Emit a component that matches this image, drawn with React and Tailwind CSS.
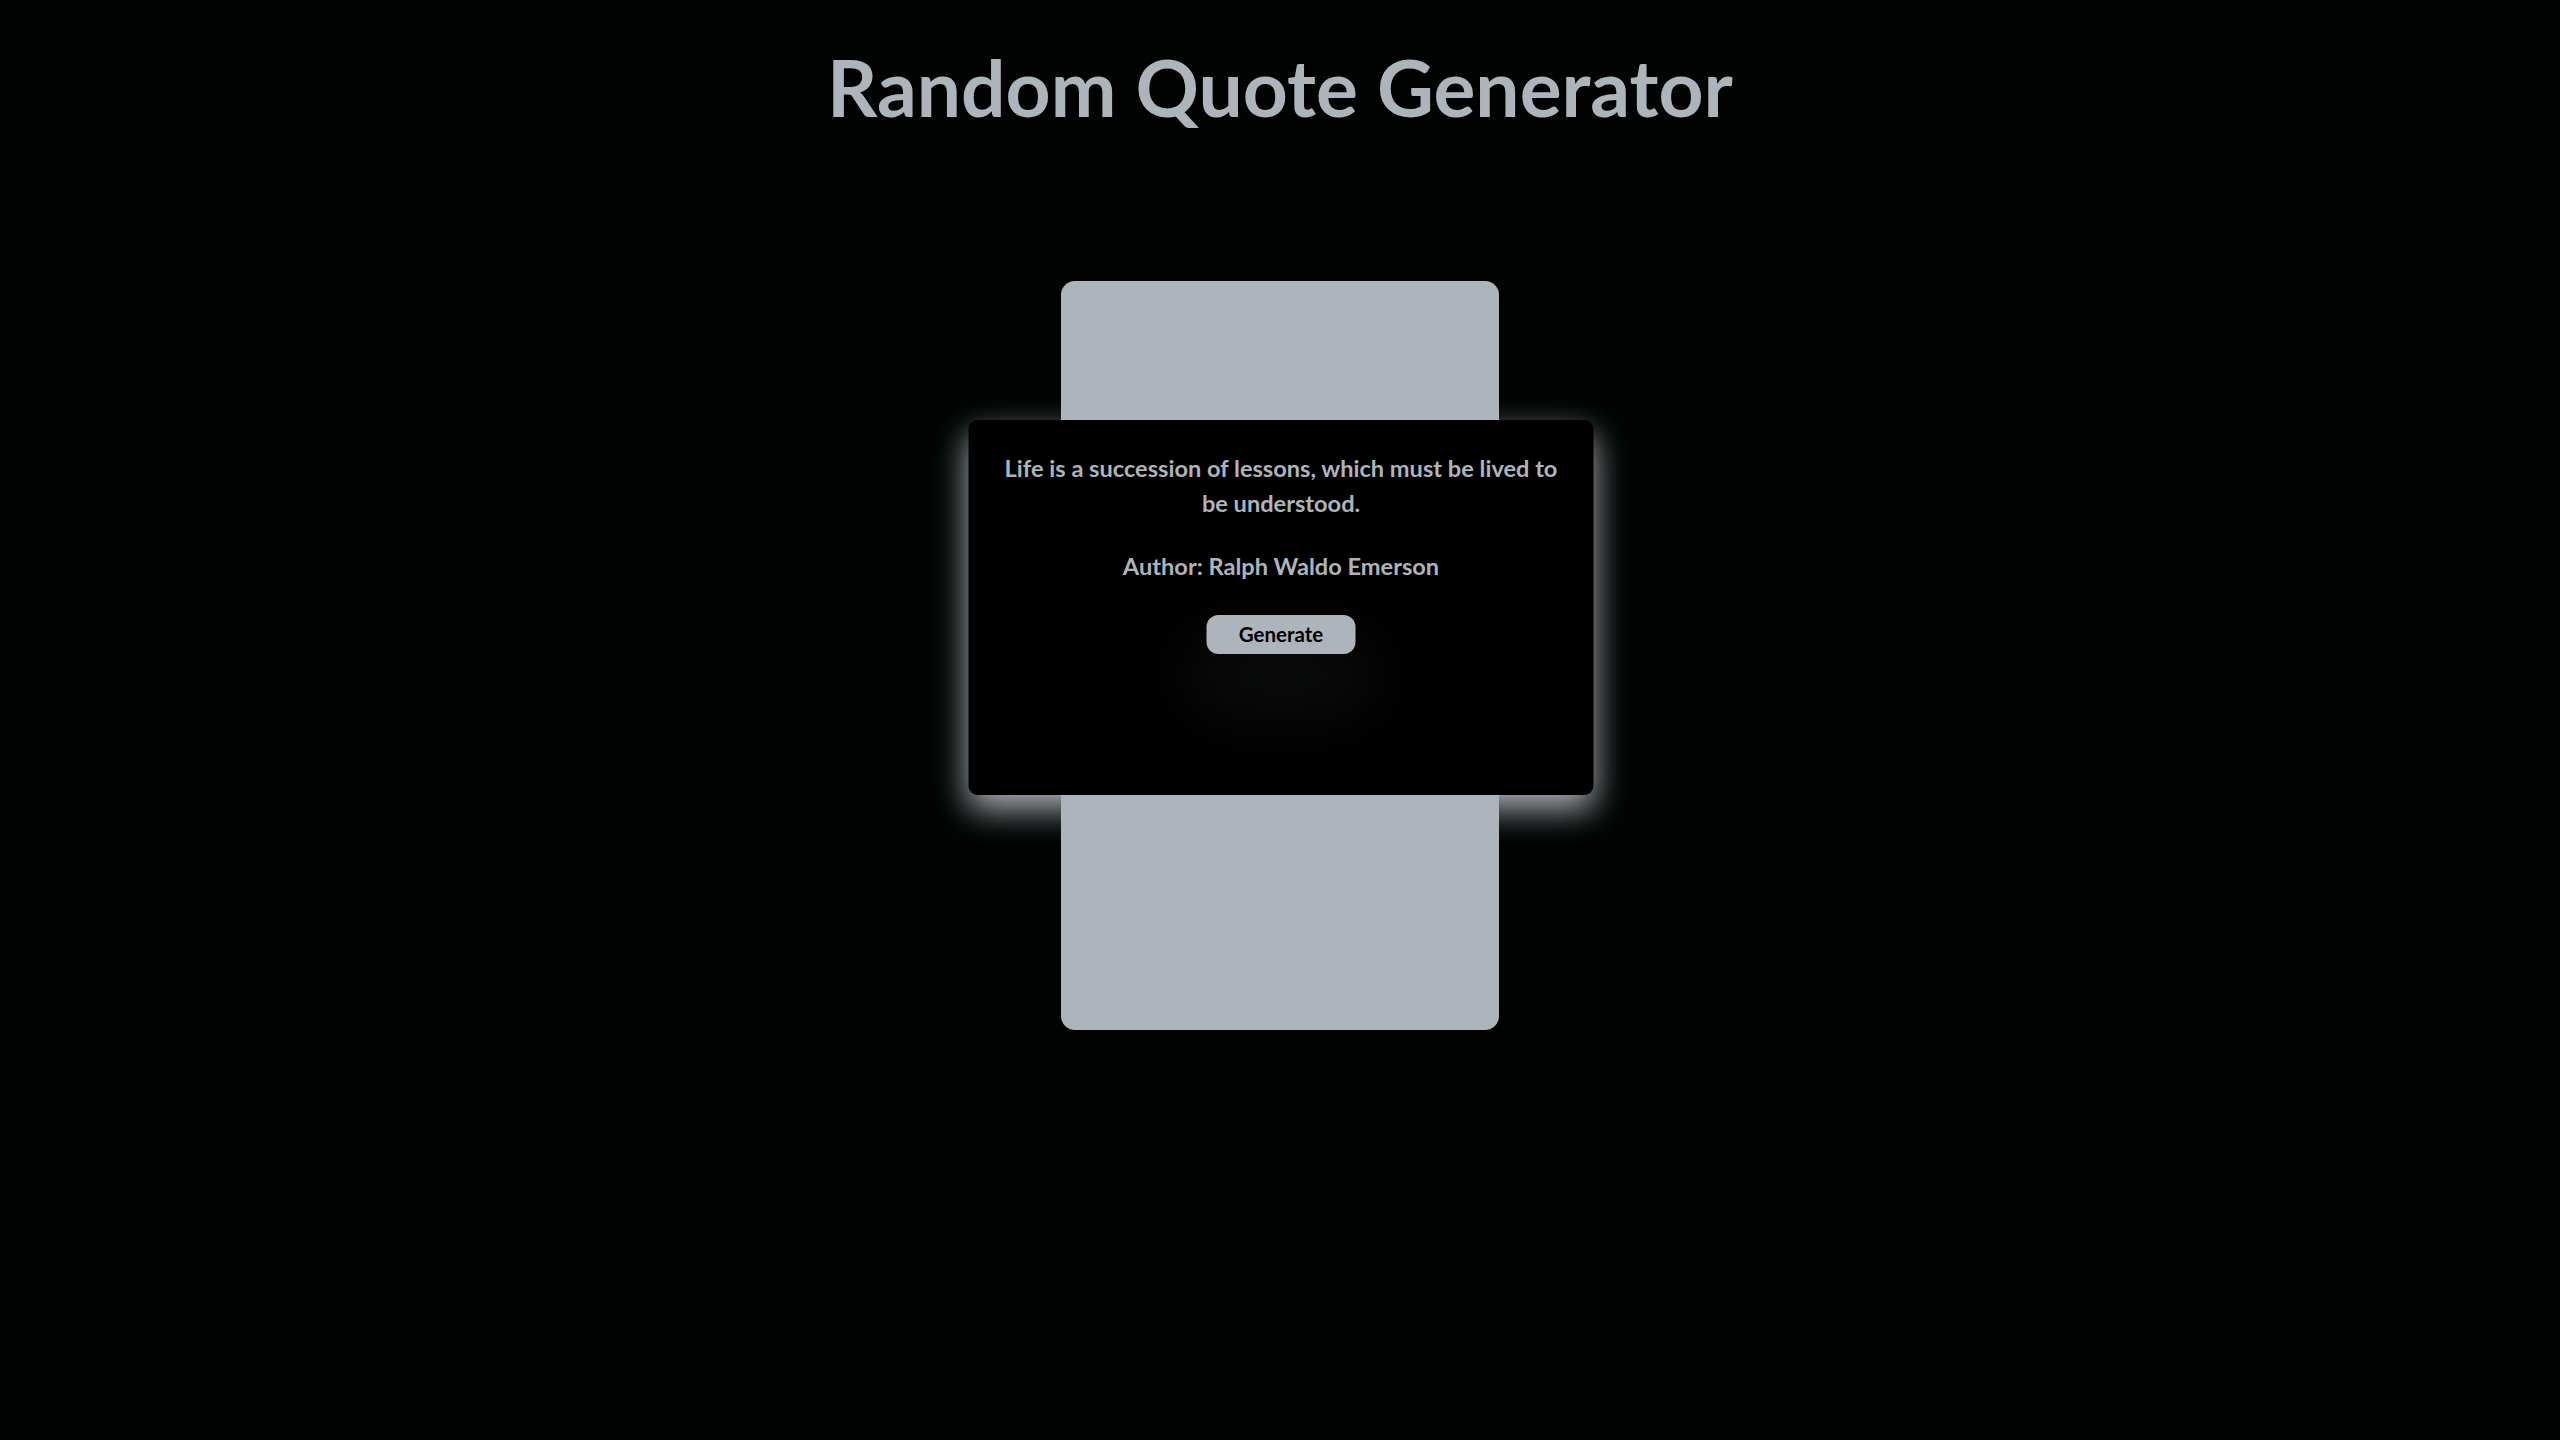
export default function App() {
  return (
    <div
      className="min-h-screen w-full bg-[#010302] flex flex-col items-center"
      style={{ fontFamily: '"Lato", "Open Sans", sans-serif' }}
    >
      <h1 className="mt-[48px] text-[78.5px] leading-none font-bold text-[#adb4bb]">
        Random Quote Generator
      </h1>
      <div className="relative mt-[154px] w-[438px] h-[749px] rounded-[14px] bg-[#adb4bb]">
        <div className="absolute left-1/2 top-[139px] -translate-x-1/2 ml-[1px] w-[625px] h-[375px] rounded-[9px] bg-black shadow-[0_14px_34px_#adb4bb] flex flex-col items-center pt-[31px] px-[22px]">
          <p className="text-[23.6px] leading-[35px] font-bold text-[#adb4bb] text-center">
            Life is a succession of lessons, which must be lived to be understood.
          </p>
          <p className="mt-[28px] text-[23.6px] leading-[35px] font-bold text-[#adb4bb] text-center">
            Author: Ralph Waldo Emerson
          </p>
          <button className="mt-[31px] w-[149px] h-[39px] rounded-[12px] bg-[#adb4bb] text-black text-[20.5px] font-bold shadow-[0_40px_70px_20px_rgba(173,180,187,0.07)]">
            Generate
          </button>
        </div>
      </div>
    </div>
  );
}
